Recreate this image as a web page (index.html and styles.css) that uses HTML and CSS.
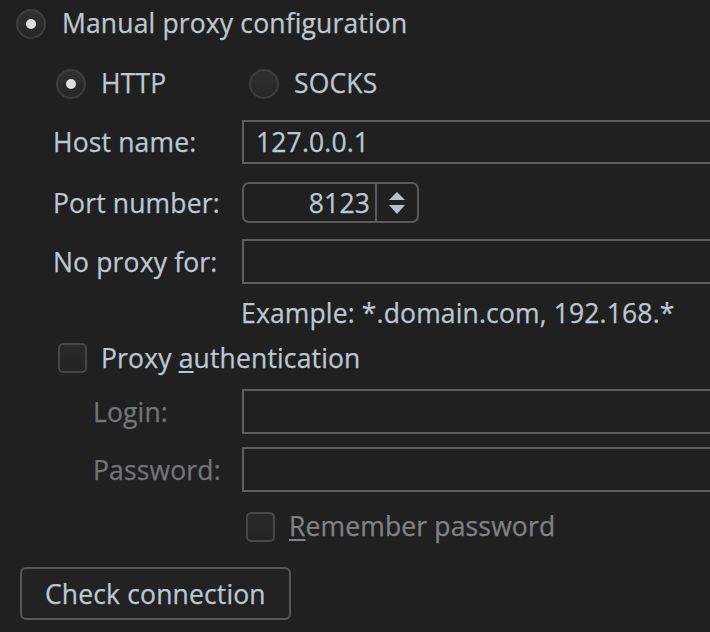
FILE: index.html
```html
<!DOCTYPE html>
<html>
<head>
<meta charset="utf-8">
<link rel="stylesheet" href="styles.css">
</head>
<body>
<div class="panel">
  <div class="row r-manual">
    <span class="radio on"></span><span class="txt">Manual proxy configuration</span>
  </div>
  <div class="row r-type">
    <div class="opt http"><span class="radio on"></span><span class="txt">HTTP</span></div>
    <div class="opt"><span class="radio"></span><span class="txt">SOCKS</span></div>
  </div>
  <div class="row r-host">
    <span class="lbl">Host name:</span>
    <div class="field">127.0.0.1</div>
  </div>
  <div class="row r-port">
    <span class="lbl">Port number:</span>
    <div class="spinner">
      <span class="num">8123</span>
      <span class="arrows">
        <svg width="18" height="28" viewBox="0 0 18 28"><path d="M9 3 L17 11 L1 11 Z" fill="#b6c2cb"/><path d="M1 16 L17 16 L9 25 Z" fill="#b6c2cb"/></svg>
      </span>
    </div>
  </div>
  <div class="row r-noproxy">
    <span class="lbl">No proxy for:</span>
    <div class="field"></div>
  </div>
  <div class="row r-example">
    <span class="example">Example: *.domain.com, 192.168.*</span>
  </div>
  <div class="row r-auth">
    <span class="check"></span><span class="txt">Proxy <u>a</u>uthentication</span>
  </div>
  <div class="row r-login">
    <span class="lbl dis">Login:</span>
    <div class="field"></div>
  </div>
  <div class="row r-pass">
    <span class="lbl dis">Password:</span>
    <div class="field"></div>
  </div>
  <div class="row r-remember">
    <span class="check"></span><span class="txt dis"><u>R</u>emember password</span>
  </div>
  <div class="row r-button">
    <button class="btn">Check connection</button>
  </div>
</div>
</body>
</html>
```
FILE: styles.css
```css
html, body {
  margin: 0;
  padding: 0;
  background: #202020;
  overflow: hidden;
}
body {
  width: 710px;
  height: 632px;
  font-family: "Open Sans", "DejaVu Sans", sans-serif;
  font-size: 26.5px;
  letter-spacing: 0.15px;
  color: #bcc8d1;
  -webkit-text-stroke: 0.25px currentColor;
}
.panel {
  display: flex;
  flex-direction: column;
  width: 1000px;
}
.row {
  display: flex;
  align-items: center;
  white-space: nowrap;
}
.radio {
  flex: none;
  width: 30px;
  height: 30px;
  box-sizing: border-box;
  border-radius: 50%;
  border: 2px solid #3e3e3e;
  background: linear-gradient(#313131, #262626);
  display: flex;
  align-items: center;
  justify-content: center;
}
.radio.on::after {
  content: "";
  width: 10px;
  height: 10px;
  border-radius: 50%;
  background: #dedede;
}
.r-manual {
  height: 48px;
  padding-left: 16px;
}
.r-manual .txt { margin-left: 16px; margin-top: -3px; }
.r-type {
  margin-top: 12px;
  height: 48px;
  padding-left: 56px;
}
.opt { display: flex; align-items: center; }
.opt .txt { margin-left: 15px; margin-top: -3px; }
.opt.http { width: 193px; }
.lbl {
  width: 189px;
  flex: none;
}
.lbl.dis { color: #727679; padding-left: 40px; width: 149px; }
.r-host, .r-port, .r-noproxy, .r-login, .r-pass { padding-left: 53px; }
.field {
  box-sizing: border-box;
  width: 560px;
  border: 2px solid #5f5f5f;
  height: 100%;
  padding-left: 12px;
  display: flex;
  align-items: center;
}
.r-host { margin-top: 12px; height: 44px; }
.r-port { margin-top: 18px; height: 41px; }
.r-noproxy { margin-top: 16px; height: 45px; }
.r-example { margin-top: 12px; height: 34px; padding-left: 241px; }
.r-auth { margin-top: 13px; height: 30px; padding-left: 58px; }
.r-auth .txt { margin-left: 14px; }
.r-login { margin-top: 16px; height: 45px; }
.r-pass { margin-top: 13px; height: 45px; }
.r-remember { margin-top: 20px; height: 30px; padding-left: 246px; }
.r-remember .txt { margin-left: 14px; margin-top: -3px; }
.r-button { margin-top: 25px; height: 53px; padding-left: 20px; }
.spinner {
  box-sizing: border-box;
  width: 177px;
  height: 100%;
  border: 2px solid #5a5a5a;
  border-radius: 7px;
  display: flex;
  align-items: stretch;
}
.num {
  width: 133px;
  box-sizing: border-box;
  text-align: right;
  padding-right: 5px;
  border-right: 2px solid #5a5a5a;
  display: flex;
  align-items: center;
  justify-content: flex-end;
}
.arrows {
  flex: 1;
  display: flex;
  align-items: center;
  justify-content: center;
}
.example { line-height: 34px; }
.check {
  flex: none;
  width: 29px;
  height: 30px;
  box-sizing: border-box;
  border: 2px solid #474747;
  border-radius: 5px;
  background: linear-gradient(#2a2a2a, #232323);
}
.txt.dis { color: #808386; }
u {
  text-decoration-thickness: 2px;
  text-underline-offset: 3px;
}
.btn {
  box-sizing: border-box;
  height: 53px;
  width: 271px;
  border: 2px solid #575757;
  border-radius: 6px;
  background: #222222;
  color: #bcc8d1;
  font-family: "Open Sans", "DejaVu Sans", sans-serif;
  font-size: 26.5px;
  letter-spacing: 0.15px;
  -webkit-text-stroke: 0.25px currentColor;
  padding: 0 0 0 23px;
  text-align: left;
}
```
